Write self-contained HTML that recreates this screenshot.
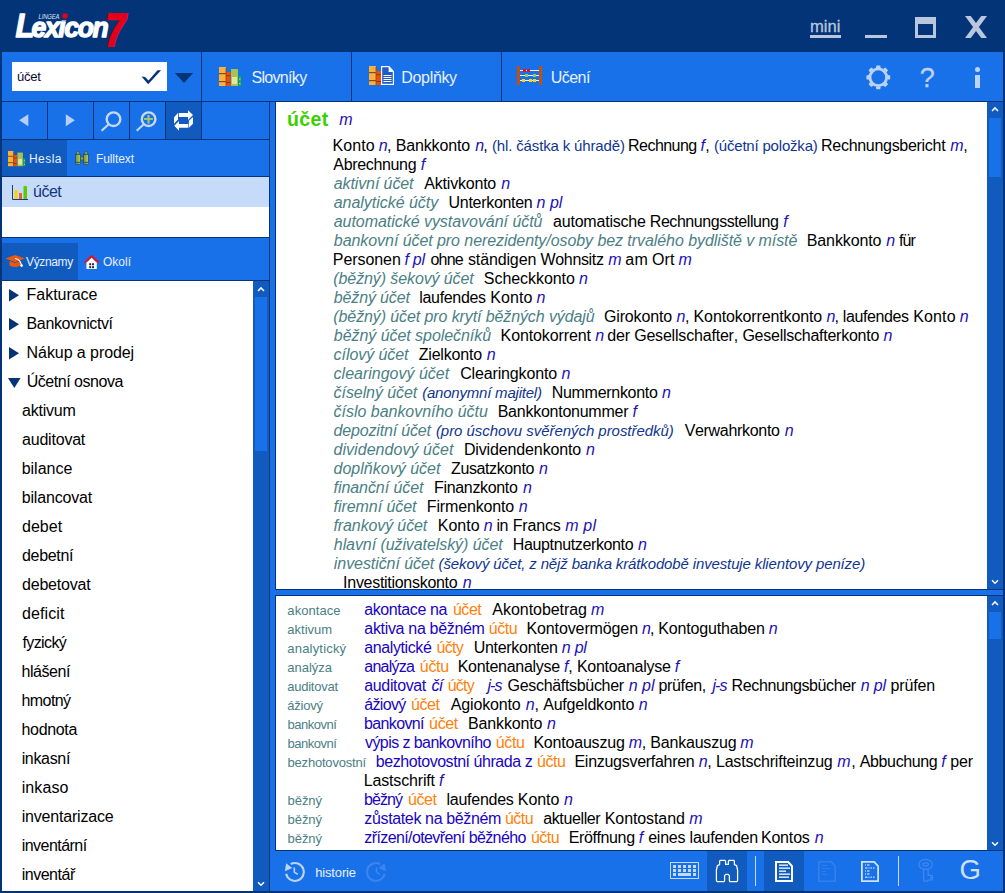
<!DOCTYPE html>
<html lang="cs">
<head>
<meta charset="utf-8">
<title>Lingea Lexicon 7</title>
<style>
*{box-sizing:border-box;margin:0;padding:0}
html,body{width:1005px;height:893px;overflow:hidden;background:#033478}
body{font-kerning:none;font-family:"Liberation Sans",sans-serif;font-size:16px;color:#000;position:relative}
div,span,svg{position:absolute}
span.i{position:static}
.r{position:absolute}
.tx{white-space:nowrap;line-height:19px;height:19px}
.tb{color:#e8f0ff;font-size:16px}
.tab{color:#e8f0ff;font-size:12px;line-height:15px;height:15px;white-space:nowrap}
.tree{font-size:16px;color:#000}
.tab13{font-size:13px;color:#e8f0ff}
.ln{white-space:nowrap;font-size:16px;line-height:19px;height:19px;font-kerning:none}
.ln *{position:static}
.p{color:#4a8084;font-style:italic}
.g{color:#1e10b4;font-style:italic}
.n{color:#0f3590;font-size:15px}
.ni{color:#0f3590;font-size:15px;font-style:italic}
.k{color:#4a8084;font-size:13px}
.b{color:#1a04c0}
.bi{color:#1a04c0;font-style:italic}
.o{color:#ff7f0a}
.h{color:#3ccf00;font-weight:bold;font-size:19.5px}
.t{color:#000}
</style>
</head>
<body>
<div style="left:0px;top:0px;width:1005px;height:52px;background:#033478;"></div>
<div style="left:2px;top:52px;width:1001px;height:839px;background:#1871e9;"></div>
<div style="left:2px;top:101px;width:1001px;height:1px;background:#033478;"></div>
<div style="left:201px;top:52px;width:1px;height:49px;background:#033478;"></div>
<div style="left:351px;top:52px;width:1px;height:49px;background:#033478;"></div>
<div style="left:501px;top:52px;width:1px;height:49px;background:#033478;"></div>
<svg style="left:0;top:0" width="140" height="52" viewBox="0 0 140 52" font-family="Liberation Sans, sans-serif">
<text x="0" y="0" transform="translate(15.4,37.0) scale(0.94,1)" font-weight="bold" font-style="italic" font-size="28.3" fill="#fff" stroke="#fff" stroke-width="1.3" stroke-linejoin="round" letter-spacing="-1.5"><tspan font-size="33" letter-spacing="-3">L</tspan>exicon</text>
<rect x="59.6" y="10" width="10" height="10" fill="#033478"/>
<text x="0" y="0" transform="translate(105.3,45.8) scale(0.78,1)" font-weight="bold" font-style="italic" font-size="47" fill="#e2001a" stroke="#e2001a" stroke-width="2" stroke-linejoin="miter">7</text>
<text x="0" y="0" transform="translate(38.6,18.8) scale(0.82,1)" font-style="italic" font-size="7.2" fill="#dfe6f2" letter-spacing="-0.2">LINGEA</text>
<circle cx="65" cy="16" r="2.8" fill="#e2001a"/>
</svg>
<div class="tx" style="left:810px;top:17px;font-size:16.6px;color:#b9c7de;-webkit-text-stroke:0.3px #b9c7de">mini</div>
<div style="left:810px;top:35px;width:31px;height:3px;background:#b9c7de;"></div>
<div style="left:865px;top:35px;width:22px;height:3px;background:#b9c7de;"></div>
<div style="left:915px;top:17px;width:21px;height:21px;border:3px solid #b9c7de;border-top-width:7px"></div>
<svg style="left:964.6px;top:15.8px" width="22" height="22" viewBox="0 0 21.4 21.4"><path d="M0 0 H5.6 L10.7 6.8 L15.8 0 H21.4 L13.5 10.7 L21.4 21.4 H15.8 L10.7 14.6 L5.6 21.4 H0 L7.9 10.7 Z" fill="#b9c7de"/></svg>
<div style="left:12px;top:62px;width:155px;height:29px;background:#fff;"></div>
<div class="tx" style="left:17px;top:67px;font-size:13px;color:#0a0a3a;letter-spacing:-0.25px">účet</div>
<svg style="left:140px;top:66px" width="24" height="20" viewBox="0 0 24 20"><path d="M1.5 10.5 L5.1 10.9 L8.5 14.5 L17.5 4.2 H21.05 L8.2 18.3 Z" fill="#033478"/></svg>
<svg style="left:174px;top:72px" width="20" height="12" viewBox="0 0 20 12"><path d="M0.9 1.0 H19.1 L10 10.9 Z" fill="#033478"/></svg>
<svg style="left:219px;top:67px" width="23" height="20" viewBox="0 0 23 20"><g>
<rect x="0" y="0" width="7" height="19" fill="#fbb03b"/>
<rect x="0" y="6" width="7" height="1.2" fill="#8a4a10"/><rect x="0" y="14" width="7" height="1.2" fill="#8a4a10"/>
<rect x="7" y="5" width="4.5" height="14" fill="#e8500e"/>
<rect x="6.6" y="1" width="0.8" height="18" fill="#8a4a10"/>
<rect x="7" y="8.2" width="4.5" height="1" fill="#a03008"/><rect x="7" y="15" width="4.5" height="1" fill="#a03008"/>
<rect x="12" y="2" width="7" height="17" fill="#a9c352"/>
<rect x="13" y="10" width="5" height="7" fill="#dde8a6"/>
<rect x="19.5" y="9" width="2.5" height="10" fill="#14b04a"/>
<rect x="20.2" y="11.5" width="1.2" height="1.2" fill="#e8e060"/><rect x="20.2" y="16" width="1.2" height="1.2" fill="#e8e060"/>
</g></svg>
<div class="ln" style="left:251.47px;top:68px"><span class="tb" style="letter-spacing:-0.687px">Slovníky</span></div>
<svg style="left:369px;top:66px" width="26" height="20" viewBox="0 0 26 20">
<rect x="0" y="0" width="7" height="19" fill="#fbb03b"/>
<rect x="0" y="6" width="7" height="1.2" fill="#8a4a10"/><rect x="0" y="14" width="7" height="1.2" fill="#8a4a10"/>
<rect x="7" y="5" width="5" height="14" fill="#e8500e"/>
<rect x="6.6" y="1" width="0.8" height="18" fill="#8a4a10"/>
<rect x="7" y="8.2" width="5" height="1" fill="#a03008"/><rect x="7" y="15" width="5" height="1" fill="#a03008"/>
<path d="M12.6 0.6 H20 L24.4 5.5 V18.4 H12.6 Z" fill="#1c5cc8" stroke="#fff" stroke-width="1.2"/>
<path d="M19.6 0.6 V6 H24.4 Z" fill="#fff"/>
<path d="M14.5 9.5 H22.5 M14.5 11.5 H22.5 M14.5 13.5 H22.5 M14.5 15.5 H22.5" stroke="#fff" stroke-width="1"/>
</svg>
<div class="ln" style="left:401.29px;top:68px"><span class="tb" style="letter-spacing:-0.327px">Doplňky</span></div>
<svg style="left:517px;top:66px" width="26" height="20" viewBox="0 0 26 20">
<path d="M2 4.5 H24 M2 9.5 H24 M2 14.5 H24" stroke="#f4f4f4" stroke-width="1"/>
<rect x="0" y="0" width="3" height="19" fill="#c05010"/><rect x="22" y="0" width="3" height="19" fill="#c05010"/>
<rect x="6" y="3" width="3" height="3" fill="#e8101c"/><rect x="10" y="3" width="3" height="3" fill="#e8101c"/>
<rect x="8" y="8" width="3" height="3" fill="#a9c352"/><rect x="16" y="8" width="3" height="3" fill="#a9c352"/>
<rect x="5" y="13" width="3" height="3" fill="#f4d41c"/><rect x="12" y="13" width="3" height="3" fill="#f4d41c"/><rect x="16" y="13" width="3" height="3" fill="#f4d41c"/>
</svg>
<div class="ln" style="left:550.77px;top:68px"><span class="tb" style="letter-spacing:-0.546px">Učení</span></div>
<svg style="left:865.3px;top:63.7px" width="26.6" height="26.6" viewBox="-14 -14 28 28"><circle cx="0" cy="0" r="8.8" fill="none" stroke="#bcd2f7" stroke-width="3"/><path d="M-2.6 -9.6 L-2.0 -12.5 H2.0 L2.6 -9.6 Z" fill="#bcd2f7" transform="rotate(0)"/><path d="M-2.6 -9.6 L-2.0 -12.5 H2.0 L2.6 -9.6 Z" fill="#bcd2f7" transform="rotate(45)"/><path d="M-2.6 -9.6 L-2.0 -12.5 H2.0 L2.6 -9.6 Z" fill="#bcd2f7" transform="rotate(90)"/><path d="M-2.6 -9.6 L-2.0 -12.5 H2.0 L2.6 -9.6 Z" fill="#bcd2f7" transform="rotate(135)"/><path d="M-2.6 -9.6 L-2.0 -12.5 H2.0 L2.6 -9.6 Z" fill="#bcd2f7" transform="rotate(180)"/><path d="M-2.6 -9.6 L-2.0 -12.5 H2.0 L2.6 -9.6 Z" fill="#bcd2f7" transform="rotate(225)"/><path d="M-2.6 -9.6 L-2.0 -12.5 H2.0 L2.6 -9.6 Z" fill="#bcd2f7" transform="rotate(270)"/><path d="M-2.6 -9.6 L-2.0 -12.5 H2.0 L2.6 -9.6 Z" fill="#bcd2f7" transform="rotate(315)"/></svg>
<div class="tx" style="left:919.8px;top:62.8px;font-size:27px;line-height:31px;height:31px;color:#bcd2f7;-webkit-text-stroke:0.3px #bcd2f7">?</div>
<div style="left:975.1px;top:74.5px;width:5px;height:13.5px;background:#bcd2f7;"></div>
<div style="left:975.1px;top:67px;width:5px;height:5px;border-radius:50%;background:#bcd2f7"></div>
<div style="left:166px;top:102px;width:35px;height:37px;background:#115abe;"></div>
<div style="left:47px;top:102px;width:1px;height:37px;background:#033478;"></div>
<div style="left:93px;top:102px;width:1px;height:37px;background:#033478;"></div>
<div style="left:129px;top:102px;width:1px;height:37px;background:#033478;"></div>
<div style="left:165px;top:102px;width:1px;height:37px;background:#033478;"></div>
<div style="left:201px;top:102px;width:1px;height:37px;background:#033478;"></div>
<div style="left:2px;top:139px;width:268px;height:1px;background:#033478;"></div>
<div style="left:269px;top:102px;width:1px;height:789px;background:#033478;"></div>
<svg style="left:0px;top:102px" width="202" height="38" viewBox="0 0 202 38">
<path d="M28.3 12.2 V24.2 L19.2 18.2 Z" fill="#b5cff8"/>
<path d="M65.8 12.2 V24.2 L74.9 18.2 Z" fill="#b5cff8"/>
<circle cx="113.5" cy="17.2" r="6.8" fill="none" stroke="#c4d9fb" stroke-width="2.4"/>
<path d="M108.4 22.4 L101.6 28.8" stroke="#c4d9fb" stroke-width="2" fill="none"/>
<circle cx="148.6" cy="17.2" r="6.8" fill="none" stroke="#c4d9fb" stroke-width="2.4"/>
<path d="M143.5 22.4 L136.7 28.8" stroke="#c4d9fb" stroke-width="2" fill="none"/>
<path d="M144.1 17 H152.9 M148.5 12.9 V21.5" stroke="#a3c475" stroke-width="2.2"/>
<g fill="#fff" transform="translate(166,0)">
<polygon points="12.8,11 22,11 22,8.3 27,13 22,17.9 22,15 12.8,15"/>
<polygon points="12,11 12,17.5 8,21.7 8,15.3"/>
<polygon points="22.3,22 13,22 13,19 8.3,23.8 13,28.7 13,25.7 22.3,25.7"/>
<polygon points="22.9,18.7 27,15.1 27,21.7 22.9,25.7"/>
</g>
</svg>
<div style="left:2px;top:140px;width:65px;height:36px;background:#115abe;"></div>
<div style="left:2px;top:176px;width:267px;height:1px;background:#033478;"></div>
<svg style="left:8px;top:151px" width="18" height="16" viewBox="0 0 23 20" preserveAspectRatio="none"><g>
<rect x="0" y="0" width="7" height="19" fill="#fbb03b"/>
<rect x="0" y="6" width="7" height="1.2" fill="#8a4a10"/><rect x="0" y="14" width="7" height="1.2" fill="#8a4a10"/>
<rect x="7" y="5" width="4.5" height="14" fill="#e8500e"/>
<rect x="6.6" y="1" width="0.8" height="18" fill="#8a4a10"/>
<rect x="7" y="8.2" width="4.5" height="1" fill="#a03008"/><rect x="7" y="15" width="4.5" height="1" fill="#a03008"/>
<rect x="12" y="2" width="7" height="17" fill="#a9c352"/>
<rect x="13" y="10" width="5" height="7" fill="#dde8a6"/>
<rect x="19.5" y="9" width="2.5" height="10" fill="#14b04a"/>
<rect x="20.2" y="11.5" width="1.2" height="1.2" fill="#e8e060"/><rect x="20.2" y="16" width="1.2" height="1.2" fill="#e8e060"/>
</g></svg>
<div class="tab" style="left:29px;top:152px;letter-spacing:0.45px">Hesla</div>
<svg style="left:75px;top:151px" width="14" height="14" viewBox="0 0 14 14">
<defs><linearGradient id="bg1" x1="0" x2="1" y1="0" y2="0"><stop offset="0" stop-color="#7d9838"/><stop offset="0.55" stop-color="#93ae4c"/><stop offset="1" stop-color="#bcd478"/></linearGradient></defs>
<rect x="1.6" y="0.6" width="2.8" height="3" rx="0.8" fill="#93ae4c" stroke="#1d4a6a" stroke-width="0.7"/>
<rect x="9.7" y="0.6" width="2.8" height="3" rx="0.8" fill="#93ae4c" stroke="#1d4a6a" stroke-width="0.7"/>
<rect x="5" y="5.9" width="4" height="3.1" fill="#8aa644" stroke="#1d4a6a" stroke-width="0.6"/>
<rect x="0.5" y="3.3" width="5" height="8" fill="url(#bg1)" stroke="#1d4a6a" stroke-width="0.8"/>
<rect x="8.5" y="3.3" width="5" height="8" fill="url(#bg1)" stroke="#1d4a6a" stroke-width="0.8"/>
<rect x="0.7" y="11.6" width="4.6" height="1.9" rx="0.5" fill="url(#bg1)" stroke="#1d4a6a" stroke-width="0.7"/>
<rect x="8.7" y="11.6" width="4.6" height="1.9" rx="0.5" fill="url(#bg1)" stroke="#1d4a6a" stroke-width="0.7"/>
</svg>
<div class="tab" style="left:96px;top:152px;letter-spacing:-0.1px">Fulltext</div>
<div style="left:2px;top:177px;width:267px;height:60px;background:#fff;"></div>
<div style="left:2px;top:177px;width:267px;height:30px;background:#c6dbfa;"></div>
<div style="left:2px;top:237px;width:267px;height:1px;background:#033478;"></div>
<svg style="left:12px;top:184px" width="16" height="16" viewBox="0 0 16 16">
<path d="M1.5 0.5 H15.5 M1.5 4.5 H15.5 M1.5 8.5 H15.5" stroke="#d0d8c8" stroke-width="0.6" stroke-dasharray="1 1"/>
<rect x="2.5" y="6" width="3" height="9" fill="#ffd000"/>
<rect x="7" y="9" width="3" height="6" fill="#e86040"/>
<rect x="11.5" y="2" width="3.5" height="13" fill="#5ccc00"/>
<path d="M0.5 1 V15.5 H16" stroke="#1c3a80" stroke-width="1" fill="none"/>
</svg>
<div class="tx" style="left:33px;top:182px;font-size:16px;color:#12357f;letter-spacing:-0.5px">účet</div>
<div style="left:2px;top:243px;width:76px;height:37px;background:#115abe;"></div>
<div style="left:2px;top:280px;width:267px;height:1px;background:#033478;"></div>
<svg style="left:5px;top:254px" width="21" height="15" viewBox="0 0 21 15">
<path d="M0.5 4.5 L10 1 L20 4.5 L10 8.2 Z" fill="#e85a10"/>
<path d="M4.5 7 V11.5 Q10 14.5 15.5 11.5 V7 L10 9 Z" fill="#e85a10"/>
<path d="M10 4.5 Q15 5 16.5 11" stroke="#fff" stroke-width="1.2" fill="none"/>
<circle cx="16.6" cy="11.6" r="1.3" fill="#fff"/>
</svg>
<div class="tab" style="left:26px;top:255px;letter-spacing:-0.35px">Významy</div>
<svg style="left:84px;top:254.8px" width="15.2" height="14.6" preserveAspectRatio="none" viewBox="0 0 16 15">
<path d="M2.5 7 H13.5 V14.5 H2.5 Z" fill="#f4f4f4"/>
<path d="M0.5 8 L8 1 L15.5 8" stroke="#e8101c" stroke-width="2" fill="none"/>
<path d="M8 2.8 L13 7.6 H3 Z" fill="#fff"/>
<rect x="5.5" y="8.5" width="2" height="2" fill="#222"/><rect x="8.5" y="8.5" width="2" height="2" fill="#222"/>
<rect x="5.5" y="11.5" width="2" height="2" fill="#222"/><rect x="8.5" y="11.5" width="2" height="2" fill="#222"/>
</svg>
<div class="tab" style="left:103px;top:255px">Okolí</div>
<div style="left:2px;top:281px;width:251px;height:610px;background:#fff;"></div>
<div style="left:253px;top:281px;width:16px;height:610px;background:#115abe;"></div>
<div style="left:255px;top:297px;width:12px;height:154px;background:#1871e9;"></div>
<svg style="left:257px;top:286px" width="8" height="6" viewBox="0 0 8 6"><path d="M1 4.9 L4 1.9 L7 4.9" stroke="#fff" stroke-width="1.45" fill="none"/></svg>
<svg style="left:257px;top:881px" width="8" height="6" viewBox="0 0 8 6"><path d="M1 1.3 L4 4.3 L7 1.3" stroke="#fff" stroke-width="1.45" fill="none"/></svg>
<svg style="left:9px;top:289px" width="11" height="13" viewBox="0 0 11 13"><path d="M0 0 L10 6.2 L0 12.4 Z" fill="#033478"/></svg>
<div class="ln" style="left:26.59px;top:285px"><span class="tree" style="letter-spacing:-0.040px">Fakturace</span></div>
<svg style="left:9px;top:318px" width="11" height="13" viewBox="0 0 11 13"><path d="M0 0 L10 6.2 L0 12.4 Z" fill="#033478"/></svg>
<div class="ln" style="left:26.59px;top:314px"><span class="tree" style="letter-spacing:-0.384px">Bankovnictví</span></div>
<svg style="left:9px;top:347px" width="11" height="13" viewBox="0 0 11 13"><path d="M0 0 L10 6.2 L0 12.4 Z" fill="#033478"/></svg>
<div class="ln" style="left:26.59px;top:343px"><span class="tree" style="letter-spacing:-0.071px">Nákup a prodej</span></div>
<svg style="left:8px;top:378px" width="13" height="11" viewBox="0 0 13 11"><path d="M0 0 H12.6 L6.3 10 Z" fill="#033478"/></svg>
<div class="ln" style="left:26.67px;top:372px"><span class="tree" style="letter-spacing:-0.462px">Účetní osnova</span></div>
<div class="ln" style="left:22.02px;top:401px"><span class="tree" style="letter-spacing:-0.215px">aktivum</span></div>
<div class="ln" style="left:22.02px;top:430px"><span class="tree" style="letter-spacing:-0.205px">auditovat</span></div>
<div class="ln" style="left:21.67px;top:459px"><span class="tree" style="letter-spacing:0.007px">bilance</span></div>
<div class="ln" style="left:21.67px;top:488px"><span class="tree" style="letter-spacing:-0.155px">bilancovat</span></div>
<div class="ln" style="left:22.03px;top:517px"><span class="tree" style="letter-spacing:0.012px">debet</span></div>
<div class="ln" style="left:22.03px;top:546px"><span class="tree" style="letter-spacing:-0.322px">debetní</span></div>
<div class="ln" style="left:22.03px;top:575px"><span class="tree" style="letter-spacing:-0.199px">debetovat</span></div>
<div class="ln" style="left:22.03px;top:604px"><span class="tree" style="letter-spacing:0.099px">deficit</span></div>
<div class="ln" style="left:22.47px;top:633px"><span class="tree" style="letter-spacing:-0.607px">fyzický</span></div>
<div class="ln" style="left:21.59px;top:662px"><span class="tree" style="letter-spacing:-0.468px">hlášení</span></div>
<div class="ln" style="left:21.59px;top:691px"><span class="tree" style="letter-spacing:-0.606px">hmotný</span></div>
<div class="ln" style="left:21.59px;top:720px"><span class="tree" style="letter-spacing:-0.354px">hodnota</span></div>
<div class="ln" style="left:21.63px;top:749px"><span class="tree" style="letter-spacing:-0.324px">inkasní</span></div>
<div class="ln" style="left:21.63px;top:778px"><span class="tree" style="letter-spacing:0.118px">inkaso</span></div>
<div class="ln" style="left:21.63px;top:807px"><span class="tree" style="letter-spacing:-0.183px">inventarizace</span></div>
<div class="ln" style="left:21.63px;top:836px"><span class="tree" style="letter-spacing:-0.524px">inventární</span></div>
<div class="ln" style="left:21.63px;top:865px"><span class="tree" style="letter-spacing:-0.476px">inventář</span></div>
<div style="left:275px;top:101px;width:729px;height:1px;background:#033478;"></div>
<div style="left:275px;top:102px;width:1px;height:488px;background:#033478;"></div>
<div style="left:276px;top:102px;width:711px;height:487px;background:#fff;"></div>
<div style="left:275px;top:589px;width:728px;height:1px;background:#033478;"></div>
<div style="left:987px;top:102px;width:16px;height:487px;background:#115abe;"></div>
<div style="left:989px;top:118px;width:12px;height:59px;background:#1871e9;"></div>
<svg style="left:991px;top:106px" width="8" height="6" viewBox="0 0 8 6"><path d="M1 4.9 L4 1.9 L7 4.9" stroke="#fff" stroke-width="1.45" fill="none"/></svg>
<svg style="left:991px;top:579px" width="8" height="6" viewBox="0 0 8 6"><path d="M1 1.3 L4 4.3 L7 1.3" stroke="#fff" stroke-width="1.45" fill="none"/></svg>
<div style="left:276px;top:102px;width:711px;height:487px;overflow:hidden" id="main">
<div class="ln" style="left:11.09px;top:8px"><span class="h" style="letter-spacing:0.384px">účet</span></div>
<div class="ln" style="left:63.33px;top:8px"><span class="g" style="letter-spacing:-0.100px">m</span></div>
<div class="ln" style="left:56.49px;top:34px"><span class="t" style="letter-spacing:0.093px">Konto</span></div>
<div class="ln" style="left:102.83px;top:34px"><span class="g" style="letter-spacing:-0.691px">n</span><span class="t" style="letter-spacing:-0.691px">,</span></div>
<div class="ln" style="left:119.69px;top:34px"><span class="t" style="letter-spacing:-0.141px">Bankkonto</span></div>
<div class="ln" style="left:199.13px;top:34px"><span class="g" style="letter-spacing:-0.708px">n</span><span class="t" style="letter-spacing:-0.708px">,</span></div>
<div class="ln" style="left:215.97px;top:34px"><span class="n" style="letter-spacing:-0.147px">(hl. částka k úhradě)</span></div>
<div class="ln" style="left:352.09px;top:34px"><span class="t" style="letter-spacing:-0.543px">Rechnung</span></div>
<div class="ln" style="left:424.46px;top:34px"><span class="g" style="letter-spacing:0.418px">f</span><span class="t" style="letter-spacing:0.418px">,</span></div>
<div class="ln" style="left:437.97px;top:34px"><span class="n" style="letter-spacing:-0.191px">(účetní položka)</span></div>
<div class="ln" style="left:545.09px;top:34px"><span class="t" style="letter-spacing:-0.296px">Rechnungsbericht</span></div>
<div class="ln" style="left:674.13px;top:34px"><span class="g" style="letter-spacing:-0.100px">m</span><span class="t" style="letter-spacing:-0.250px">,</span></div>
<div class="ln" style="left:57.37px;top:53px"><span class="t" style="letter-spacing:-0.347px">Abrechnung</span></div>
<div class="ln" style="left:144.86px;top:53px"><span class="g" style="letter-spacing:-0.100px">f</span></div>
<div class="ln" style="left:57.74px;top:72px"><span class="p" style="letter-spacing:-0.102px">aktivní účet</span></div>
<div class="ln" style="left:148.37px;top:72px"><span class="t" style="letter-spacing:-0.212px">Aktivkonto</span></div>
<div class="ln" style="left:225.23px;top:72px"><span class="g" style="letter-spacing:-0.100px">n</span></div>
<div class="ln" style="left:57.74px;top:91px"><span class="p" style="letter-spacing:-0.034px">analytické účty</span></div>
<div class="ln" style="left:172.57px;top:91px"><span class="t" style="letter-spacing:-0.299px">Unterkonten</span></div>
<div class="ln" style="left:260.53px;top:91px"><span class="g" style="letter-spacing:0.036px">n pl</span></div>
<div class="ln" style="left:57.74px;top:110px"><span class="p" style="letter-spacing:-0.041px">automatické vystavování účtů</span></div>
<div class="ln" style="left:277.02px;top:110px"><span class="t" style="letter-spacing:-0.207px">automatische</span></div>
<div class="ln" style="left:373.79px;top:110px"><span class="t" style="letter-spacing:-0.441px">Rechnungsstellung</span></div>
<div class="ln" style="left:507.26px;top:110px"><span class="g" style="letter-spacing:-0.100px">f</span></div>
<div class="ln" style="left:57.87px;top:129px"><span class="p" style="letter-spacing:-0.067px">bankovní účet pro nerezidenty/osoby bez trvalého bydliště v místě</span></div>
<div class="ln" style="left:530.79px;top:129px"><span class="t" style="letter-spacing:-0.116px">Bankkonto</span></div>
<div class="ln" style="left:610.13px;top:129px"><span class="g" style="letter-spacing:-0.100px">n</span></div>
<div class="ln" style="left:622.97px;top:129px"><span class="t" style="letter-spacing:-0.890px">für</span></div>
<div class="ln" style="left:56.79px;top:148px"><span class="t" style="letter-spacing:-0.063px">Personen</span></div>
<div class="ln" style="left:128.46px;top:148px"><span class="g" style="letter-spacing:-0.255px">f pl</span></div>
<div class="ln" style="left:154.43px;top:148px"><span class="t" style="letter-spacing:-0.756px">ohne</span></div>
<div class="ln" style="left:191.95px;top:148px"><span class="t" style="letter-spacing:-0.127px">ständigen</span></div>
<div class="ln" style="left:264.53px;top:148px"><span class="t" style="letter-spacing:-0.342px">Wohnsitz</span></div>
<div class="ln" style="left:332.13px;top:148px"><span class="g" style="letter-spacing:-0.100px">m</span></div>
<div class="ln" style="left:349.32px;top:148px"><span class="t" style="letter-spacing:0.195px">am</span></div>
<div class="ln" style="left:375.94px;top:148px"><span class="t" style="letter-spacing:0.087px">Ort</span></div>
<div class="ln" style="left:402.53px;top:148px"><span class="g" style="letter-spacing:-0.100px">m</span></div>
<div class="ln" style="left:57.35px;top:167px"><span class="p" style="letter-spacing:-0.105px">(běžný) šekový účet</span></div>
<div class="ln" style="left:207.87px;top:167px"><span class="t" style="letter-spacing:-0.061px">Scheckkonto</span></div>
<div class="ln" style="left:303.03px;top:167px"><span class="g" style="letter-spacing:-0.100px">n</span></div>
<div class="ln" style="left:57.87px;top:186px"><span class="p" style="letter-spacing:-0.157px">běžný účet</span></div>
<div class="ln" style="left:143.32px;top:186px"><span class="t" style="letter-spacing:-0.328px">laufendes</span></div>
<div class="ln" style="left:214.29px;top:186px"><span class="t" style="letter-spacing:0.068px">Konto</span></div>
<div class="ln" style="left:260.53px;top:186px"><span class="g" style="letter-spacing:-0.100px">n</span></div>
<div class="ln" style="left:57.35px;top:205px"><span class="p" style="letter-spacing:-0.104px">(běžný) účet pro krytí běžných výdajů</span></div>
<div class="ln" style="left:327.90px;top:205px"><span class="t" style="letter-spacing:-0.129px">Girokonto</span></div>
<div class="ln" style="left:400.43px;top:205px"><span class="g" style="letter-spacing:-0.391px">n</span><span class="t" style="letter-spacing:-0.391px">,</span></div>
<div class="ln" style="left:417.59px;top:205px"><span class="t" style="letter-spacing:-0.131px">Kontokorrentkonto</span></div>
<div class="ln" style="left:550.43px;top:205px"><span class="g" style="letter-spacing:-0.900px">n</span><span class="t" style="letter-spacing:-0.900px">,</span></div>
<div class="ln" style="left:566.72px;top:205px"><span class="t" style="letter-spacing:-0.378px">laufendes</span></div>
<div class="ln" style="left:637.29px;top:205px"><span class="t" style="letter-spacing:0.109px">Konto</span></div>
<div class="ln" style="left:683.73px;top:205px"><span class="g" style="letter-spacing:-0.100px">n</span></div>
<div class="ln" style="left:57.87px;top:224px"><span class="p" style="letter-spacing:-0.054px">běžný účet společníků</span></div>
<div class="ln" style="left:224.59px;top:224px"><span class="t" style="letter-spacing:-0.106px">Kontokorrent</span></div>
<div class="ln" style="left:319.23px;top:224px"><span class="g" style="letter-spacing:-0.100px">n</span></div>
<div class="ln" style="left:331.33px;top:224px"><span class="t" style="letter-spacing:-0.190px">der Gesellschafter,</span></div>
<div class="ln" style="left:466.40px;top:224px"><span class="t" style="letter-spacing:-0.248px">Gesellschafterkonto</span></div>
<div class="ln" style="left:607.53px;top:224px"><span class="g" style="letter-spacing:-0.100px">n</span></div>
<div class="ln" style="left:57.58px;top:243px"><span class="p" style="letter-spacing:-0.062px">cílový účet</span></div>
<div class="ln" style="left:142.69px;top:243px"><span class="t" style="letter-spacing:-0.193px">Zielkonto</span></div>
<div class="ln" style="left:210.83px;top:243px"><span class="g" style="letter-spacing:-0.100px">n</span></div>
<div class="ln" style="left:57.58px;top:262px"><span class="p" style="letter-spacing:-0.003px">clearingový účet</span></div>
<div class="ln" style="left:184.19px;top:262px"><span class="t" style="letter-spacing:-0.145px">Clearingkonto</span></div>
<div class="ln" style="left:285.43px;top:262px"><span class="g" style="letter-spacing:-0.100px">n</span></div>
<div class="ln" style="left:57.58px;top:281px"><span class="p" style="letter-spacing:-0.074px">číselný účet</span></div>
<div class="ln" style="left:146.20px;top:281px"><span class="ni" style="letter-spacing:-0.211px">(anonymní majitel)</span></div>
<div class="ln" style="left:275.69px;top:281px"><span class="t" style="letter-spacing:-0.290px">Nummernkonto</span></div>
<div class="ln" style="left:385.93px;top:281px"><span class="g" style="letter-spacing:-0.100px">n</span></div>
<div class="ln" style="left:57.58px;top:300px"><span class="p" style="letter-spacing:-0.026px">číslo bankovního účtu</span></div>
<div class="ln" style="left:221.69px;top:300px"><span class="t" style="letter-spacing:-0.251px">Bankkontonummer</span></div>
<div class="ln" style="left:356.56px;top:300px"><span class="g" style="letter-spacing:-0.100px">f</span></div>
<div class="ln" style="left:57.56px;top:319px"><span class="p" style="letter-spacing:-0.172px">depozitní účet</span></div>
<div class="ln" style="left:159.90px;top:319px"><span class="ni" style="letter-spacing:-0.042px">(pro úschovu svěřených prostředků)</span></div>
<div class="ln" style="left:408.63px;top:319px"><span class="t" style="letter-spacing:-0.307px">Verwahrkonto</span></div>
<div class="ln" style="left:508.73px;top:319px"><span class="g" style="letter-spacing:-0.100px">n</span></div>
<div class="ln" style="left:57.56px;top:338px"><span class="p" style="letter-spacing:0.040px">dividendový účet</span></div>
<div class="ln" style="left:187.89px;top:338px"><span class="t" style="letter-spacing:-0.129px">Dividendenkonto</span></div>
<div class="ln" style="left:310.03px;top:338px"><span class="g" style="letter-spacing:-0.100px">n</span></div>
<div class="ln" style="left:57.56px;top:357px"><span class="p" style="letter-spacing:0.012px">doplňkový účet</span></div>
<div class="ln" style="left:174.99px;top:357px"><span class="t" style="letter-spacing:-0.378px">Zusatzkonto</span></div>
<div class="ln" style="left:263.03px;top:357px"><span class="g" style="letter-spacing:-0.100px">n</span></div>
<div class="ln" style="left:57.56px;top:376px"><span class="p" style="letter-spacing:-0.062px">finanční účet</span></div>
<div class="ln" style="left:158.09px;top:376px"><span class="t" style="letter-spacing:-0.338px">Finanzkonto</span></div>
<div class="ln" style="left:246.93px;top:376px"><span class="g" style="letter-spacing:-0.100px">n</span></div>
<div class="ln" style="left:57.56px;top:395px"><span class="p" style="letter-spacing:-0.055px">firemní účet</span></div>
<div class="ln" style="left:150.79px;top:395px"><span class="t" style="letter-spacing:-0.154px">Firmenkonto</span></div>
<div class="ln" style="left:242.63px;top:395px"><span class="g" style="letter-spacing:-0.100px">n</span></div>
<div class="ln" style="left:57.56px;top:414px"><span class="p" style="letter-spacing:-0.123px">frankový účet</span></div>
<div class="ln" style="left:161.79px;top:414px"><span class="t" style="letter-spacing:-0.007px">Konto</span></div>
<div class="ln" style="left:207.83px;top:414px"><span class="g" style="letter-spacing:-0.100px">n</span></div>
<div class="ln" style="left:220.43px;top:414px"><span class="t" style="letter-spacing:-0.395px">in</span></div>
<div class="ln" style="left:236.69px;top:414px"><span class="t" style="letter-spacing:-0.162px">Francs</span></div>
<div class="ln" style="left:289.13px;top:414px"><span class="g" style="letter-spacing:0.227px">m pl</span></div>
<div class="ln" style="left:57.83px;top:433px"><span class="p" style="letter-spacing:-0.080px">hlavní (uživatelský) účet</span></div>
<div class="ln" style="left:236.79px;top:433px"><span class="t" style="letter-spacing:-0.368px">Hauptnutzerkonto</span></div>
<div class="ln" style="left:361.93px;top:433px"><span class="g" style="letter-spacing:-0.100px">n</span></div>
<div class="ln" style="left:57.84px;top:452px"><span class="p" style="letter-spacing:-0.070px">investiční účet</span></div>
<div class="ln" style="left:162.60px;top:452px"><span class="ni" style="letter-spacing:-0.135px">(šekový účet, z nějž banka krátkodobě investuje klientovy peníze)</span></div>
<div class="ln" style="left:67.12px;top:471px"><span class="t" style="letter-spacing:-0.289px">Investitionskonto</span></div>
<div class="ln" style="left:186.73px;top:471px"><span class="g" style="letter-spacing:-0.100px">n</span></div>
</div>
<div style="left:275px;top:595px;width:728px;height:1px;background:#033478;"></div>
<div style="left:275px;top:596px;width:1px;height:255px;background:#033478;"></div>
<div style="left:276px;top:596px;width:711px;height:254px;background:#fff;"></div>
<div style="left:275px;top:850px;width:728px;height:1px;background:#033478;"></div>
<div style="left:987px;top:596px;width:16px;height:254px;background:#115abe;"></div>
<div style="left:989px;top:612px;width:12px;height:27px;background:#1871e9;"></div>
<svg style="left:991px;top:600px" width="8" height="6" viewBox="0 0 8 6"><path d="M1 4.9 L4 1.9 L7 4.9" stroke="#fff" stroke-width="1.45" fill="none"/></svg>
<svg style="left:991px;top:841px" width="8" height="6" viewBox="0 0 8 6"><path d="M1 1.3 L4 4.3 L7 1.3" stroke="#fff" stroke-width="1.45" fill="none"/></svg>
<div style="left:276px;top:596px;width:711px;height:254px;overflow:hidden" id="lower">
<div class="ln" style="left:11.35px;top:4px"><span class="k" style="letter-spacing:0.053px">akontace</span></div>
<div class="ln" style="left:88.32px;top:4px"><span class="b" style="letter-spacing:-0.420px">akontace na</span></div>
<div class="ln" style="left:176.91px;top:4px"><span class="o" style="letter-spacing:-0.446px">účet</span></div>
<div class="ln" style="left:216.37px;top:4px"><span class="t" style="letter-spacing:-0.047px">Akontobetrag</span></div>
<div class="ln" style="left:314.93px;top:4px"><span class="g" style="letter-spacing:-0.100px">m</span></div>
<div class="ln" style="left:11.35px;top:23px"><span class="k" style="letter-spacing:-0.013px">aktivum</span></div>
<div class="ln" style="left:88.32px;top:23px"><span class="b" style="letter-spacing:-0.318px">aktiva na běžném</span></div>
<div class="ln" style="left:212.81px;top:23px"><span class="o" style="letter-spacing:-0.431px">účtu</span></div>
<div class="ln" style="left:250.49px;top:23px"><span class="t" style="letter-spacing:-0.117px">Kontovermögen</span></div>
<div class="ln" style="left:365.93px;top:23px"><span class="g" style="letter-spacing:-0.900px">n</span><span class="t" style="letter-spacing:-0.900px">,</span></div>
<div class="ln" style="left:382.29px;top:23px"><span class="t" style="letter-spacing:-0.166px">Kontoguthaben</span></div>
<div class="ln" style="left:492.73px;top:23px"><span class="g" style="letter-spacing:-0.100px">n</span></div>
<div class="ln" style="left:11.35px;top:42px"><span class="k" style="letter-spacing:0.189px">analytický</span></div>
<div class="ln" style="left:88.32px;top:42px"><span class="b" style="letter-spacing:-0.406px">analytické</span></div>
<div class="ln" style="left:160.51px;top:42px"><span class="o" style="letter-spacing:-0.676px">účty</span></div>
<div class="ln" style="left:197.67px;top:42px"><span class="t" style="letter-spacing:-0.289px">Unterkonten</span></div>
<div class="ln" style="left:285.83px;top:42px"><span class="g" style="letter-spacing:-0.264px">n pl</span></div>
<div class="ln" style="left:11.35px;top:61px"><span class="k" style="letter-spacing:-0.043px">analýza</span></div>
<div class="ln" style="left:88.32px;top:61px"><span class="b" style="letter-spacing:-0.745px">analýza</span></div>
<div class="ln" style="left:143.81px;top:61px"><span class="o" style="letter-spacing:-0.298px">účtu</span></div>
<div class="ln" style="left:181.69px;top:61px"><span class="t" style="letter-spacing:-0.286px">Kontenanalyse</span></div>
<div class="ln" style="left:288.06px;top:61px"><span class="g" style="letter-spacing:-0.164px">f</span><span class="t" style="letter-spacing:-0.164px">,</span></div>
<div class="ln" style="left:300.99px;top:61px"><span class="t" style="letter-spacing:-0.285px">Kontoanalyse</span></div>
<div class="ln" style="left:398.76px;top:61px"><span class="g" style="letter-spacing:-0.100px">f</span></div>
<div class="ln" style="left:11.35px;top:80px"><span class="k" style="letter-spacing:-0.264px">auditovat</span></div>
<div class="ln" style="left:88.32px;top:80px"><span class="b" style="letter-spacing:-0.368px">auditovat</span></div>
<div class="ln" style="left:155.58px;top:80px"><span class="bi" style="letter-spacing:-0.900px">čí</span></div>
<div class="ln" style="left:171.71px;top:80px"><span class="o" style="letter-spacing:-0.776px">účty</span></div>
<div class="ln" style="left:211.39px;top:80px"><span class="g" style="letter-spacing:-0.900px">j-s</span></div>
<div class="ln" style="left:231.60px;top:80px"><span class="t" style="letter-spacing:-0.320px">Geschäftsbücher</span></div>
<div class="ln" style="left:352.73px;top:80px"><span class="g" style="letter-spacing:0.003px">n pl</span></div>
<div class="ln" style="left:382.57px;top:80px"><span class="t" style="letter-spacing:-0.374px">prüfen,</span></div>
<div class="ln" style="left:436.39px;top:80px"><span class="g" style="letter-spacing:-0.900px">j-s</span></div>
<div class="ln" style="left:455.59px;top:80px"><span class="t" style="letter-spacing:-0.385px">Rechnungsbücher</span></div>
<div class="ln" style="left:584.73px;top:80px"><span class="g" style="letter-spacing:-0.164px">n pl</span></div>
<div class="ln" style="left:614.57px;top:80px"><span class="t" style="letter-spacing:-0.139px">prüfen</span></div>
<div class="ln" style="left:11.35px;top:99px"><span class="k" style="letter-spacing:-0.234px">ážiový</span></div>
<div class="ln" style="left:88.32px;top:99px"><span class="b" style="letter-spacing:-0.668px">ážiový</span></div>
<div class="ln" style="left:135.11px;top:99px"><span class="o" style="letter-spacing:-0.446px">účet</span></div>
<div class="ln" style="left:174.77px;top:99px"><span class="t" style="letter-spacing:-0.145px">Agiokonto</span></div>
<div class="ln" style="left:249.73px;top:99px"><span class="g" style="letter-spacing:-0.109px">n</span><span class="t" style="letter-spacing:-0.109px">,</span></div>
<div class="ln" style="left:267.17px;top:99px"><span class="t" style="letter-spacing:-0.191px">Aufgeldkonto</span></div>
<div class="ln" style="left:362.73px;top:99px"><span class="g" style="letter-spacing:-0.100px">n</span></div>
<div class="ln" style="left:11.56px;top:118px"><span class="k" style="letter-spacing:-0.480px">bankovní</span></div>
<div class="ln" style="left:87.97px;top:118px"><span class="b" style="letter-spacing:-0.633px">bankovní</span></div>
<div class="ln" style="left:153.11px;top:118px"><span class="o" style="letter-spacing:-0.380px">účet</span></div>
<div class="ln" style="left:192.09px;top:118px"><span class="t" style="letter-spacing:-0.166px">Bankkonto</span></div>
<div class="ln" style="left:270.93px;top:118px"><span class="g" style="letter-spacing:-0.100px">n</span></div>
<div class="ln" style="left:11.56px;top:137px"><span class="k" style="letter-spacing:-0.480px">bankovní</span></div>
<div class="ln" style="left:88.95px;top:137px"><span class="b" style="letter-spacing:-0.562px">výpis z bankovního</span></div>
<div class="ln" style="left:219.71px;top:137px"><span class="o" style="letter-spacing:-0.331px">účtu</span></div>
<div class="ln" style="left:257.39px;top:137px"><span class="t" style="letter-spacing:-0.196px">Kontoauszug</span></div>
<div class="ln" style="left:352.73px;top:137px"><span class="g" style="letter-spacing:-0.420px">m</span><span class="t" style="letter-spacing:-0.420px">,</span></div>
<div class="ln" style="left:374.29px;top:137px"><span class="t" style="letter-spacing:-0.202px">Bankauszug</span></div>
<div class="ln" style="left:464.33px;top:137px"><span class="g" style="letter-spacing:-0.100px">m</span></div>
<div class="ln" style="left:11.56px;top:156px"><span class="k" style="letter-spacing:-0.204px">bezhotovostní</span></div>
<div class="ln" style="left:99.87px;top:156px"><span class="b" style="letter-spacing:-0.453px">bezhotovostní úhrada z</span></div>
<div class="ln" style="left:261.11px;top:156px"><span class="o" style="letter-spacing:-0.465px">účtu</span></div>
<div class="ln" style="left:298.49px;top:156px"><span class="t" style="letter-spacing:-0.284px">Einzugsverfahren</span></div>
<div class="ln" style="left:422.63px;top:156px"><span class="g" style="letter-spacing:-0.191px">n</span><span class="t" style="letter-spacing:-0.191px">,</span></div>
<div class="ln" style="left:439.99px;top:156px"><span class="t" style="letter-spacing:-0.207px">Lastschrifteinzug</span></div>
<div class="ln" style="left:561.13px;top:156px"><span class="g" style="letter-spacing:0.661px">m</span><span class="t" style="letter-spacing:0.661px">,</span></div>
<div class="ln" style="left:583.77px;top:156px"><span class="t" style="letter-spacing:-0.375px">Abbuchung</span></div>
<div class="ln" style="left:665.26px;top:156px"><span class="g" style="letter-spacing:-0.100px">f</span></div>
<div class="ln" style="left:674.27px;top:156px"><span class="t" style="letter-spacing:-0.214px">per</span></div>
<div class="ln" style="left:87.69px;top:175px"><span class="t" style="letter-spacing:-0.158px">Lastschrift</span></div>
<div class="ln" style="left:163.06px;top:175px"><span class="g" style="letter-spacing:-0.100px">f</span></div>
<div class="ln" style="left:11.56px;top:194px"><span class="k" style="letter-spacing:-0.057px">běžný</span></div>
<div class="ln" style="left:87.97px;top:194px"><span class="b" style="letter-spacing:-0.900px">běžný</span></div>
<div class="ln" style="left:131.91px;top:194px"><span class="o" style="letter-spacing:-0.380px">účet</span></div>
<div class="ln" style="left:170.52px;top:194px"><span class="t" style="letter-spacing:-0.267px">laufendes</span></div>
<div class="ln" style="left:241.79px;top:194px"><span class="t" style="letter-spacing:-0.057px">Konto</span></div>
<div class="ln" style="left:288.03px;top:194px"><span class="g" style="letter-spacing:-0.100px">n</span></div>
<div class="ln" style="left:11.56px;top:213px"><span class="k" style="letter-spacing:-0.057px">běžný</span></div>
<div class="ln" style="left:88.35px;top:213px"><span class="b" style="letter-spacing:-0.364px">zůstatek na běžném</span></div>
<div class="ln" style="left:229.01px;top:213px"><span class="o" style="letter-spacing:-0.565px">účtu</span></div>
<div class="ln" style="left:267.22px;top:213px"><span class="t" style="letter-spacing:-0.379px">aktueller</span></div>
<div class="ln" style="left:328.79px;top:213px"><span class="t" style="letter-spacing:-0.101px">Kontostand</span></div>
<div class="ln" style="left:413.13px;top:213px"><span class="g" style="letter-spacing:-0.100px">m</span></div>
<div class="ln" style="left:11.56px;top:232px"><span class="k" style="letter-spacing:-0.057px">běžný</span></div>
<div class="ln" style="left:88.35px;top:232px"><span class="b" style="letter-spacing:-0.613px">zřízení/otevření běžného</span></div>
<div class="ln" style="left:254.91px;top:232px"><span class="o" style="letter-spacing:-0.465px">účtu</span></div>
<div class="ln" style="left:292.79px;top:232px"><span class="t" style="letter-spacing:-0.392px">Eröffnung</span></div>
<div class="ln" style="left:362.66px;top:232px"><span class="g" style="letter-spacing:-0.100px">f</span></div>
<div class="ln" style="left:372.22px;top:232px"><span class="t" style="letter-spacing:-0.262px">eines</span></div>
<div class="ln" style="left:413.62px;top:232px"><span class="t" style="letter-spacing:-0.221px">laufenden</span></div>
<div class="ln" style="left:484.89px;top:232px"><span class="t" style="letter-spacing:-0.164px">Kontos</span></div>
<div class="ln" style="left:538.73px;top:232px"><span class="g" style="letter-spacing:-0.100px">n</span></div>
</div>
<div style="left:707px;top:851px;width:40px;height:40px;background:#115abe;"></div>
<div style="left:764px;top:851px;width:40px;height:40px;background:#115abe;"></div>
<div style="left:754.8px;top:856px;width:1.3px;height:30px;background:#c4d9fb;"></div>
<div style="left:897.9px;top:856px;width:1.3px;height:30px;background:#c4d9fb;"></div>
<svg style="left:283px;top:860px" width="24" height="24" viewBox="0 0 24 24"><g>
<path d="M7.7 4.05 A8.95 8.95 0 1 1 3.15 13.8" stroke="#bcd3f9" stroke-width="2.1" fill="none"/>
<path d="M3.1 3.3 L9.3 8.0 L1.9 11.3 Z" fill="#bcd3f9"/></g>
<path d="M11.3 7.6 V12.1 L14.8 14.4" stroke="#bcd3f9" stroke-width="1.6" fill="none"/>
</svg>
<div class="ln" style="left:315.20px;top:862px"><span class="tab13" style="letter-spacing:-0.147px">historie</span></div>
<svg style="left:364px;top:860px" width="24" height="24" viewBox="0 0 24 24"><g transform="translate(23.8,0) scale(-1,1)">
<path d="M7.7 4.05 A8.95 8.95 0 1 1 3.15 13.8" stroke="#3d84ee" stroke-width="2.1" fill="none"/>
<path d="M3.1 3.3 L9.3 8.0 L1.9 11.3 Z" fill="#3d84ee"/></g>
<path d="M12.5 7.6 V12.1 L16 14.4" stroke="#3d84ee" stroke-width="1.6" fill="none"/>
</svg>
<svg style="left:670px;top:862px" width="29" height="17" viewBox="0 0 29 17"><rect x="0.5" y="0.5" width="28" height="16" fill="none" stroke="#c4d9fb" stroke-width="1"/><rect x="3" y="3" width="3" height="3" fill="#c4d9fb"/><rect x="8" y="3" width="3" height="3" fill="#c4d9fb"/><rect x="13" y="3" width="3" height="3" fill="#c4d9fb"/><rect x="18" y="3" width="3" height="3" fill="#c4d9fb"/><rect x="23" y="3" width="3" height="3" fill="#c4d9fb"/><rect x="3" y="7" width="3" height="3" fill="#c4d9fb"/><rect x="8" y="7" width="3" height="3" fill="#c4d9fb"/><rect x="13" y="7" width="3" height="3" fill="#c4d9fb"/><rect x="18" y="7" width="3" height="3" fill="#c4d9fb"/><rect x="23" y="7" width="3" height="3" fill="#c4d9fb"/><rect x="3" y="11" width="3" height="3" fill="#c4d9fb"/><rect x="8" y="11" width="13" height="3" fill="#c4d9fb"/><rect x="23" y="11" width="3" height="3" fill="#c4d9fb"/></svg>
<svg style="left:705px;top:850px" width="40" height="42" viewBox="0 0 40 42">
<path d="M15.2 10.4 H20 L20.6 11.4 V14.4 H23.4 V11.4 L24 10.4 H28.8 L29.4 11.4 V14.6 L31.6 15.6 L32.6 20 V30.6 L31.8 31.7 H25 L24.4 30.6 V25.6 L23.2 24.3 H20.8 L19.6 25.6 V30.6 L19 31.7 H12.2 L11.4 30.6 V20 L12.4 15.6 L14.6 14.6 V11.4 Z" fill="none" stroke="#fff" stroke-width="1.25" stroke-linejoin="round"/>
</svg>
<svg style="left:775px;top:861px" width="18" height="21" viewBox="0 0 18 21"><path d="M1.0 1.0 H13.2 L17.0 5.2 V20.0 H1.0 Z" fill="none" stroke="#fff" stroke-width="2"/><rect x="4" y="3.4999999999999996" width="9" height="1.3" fill="#fff"/><rect x="4" y="6.5" width="11" height="1.3" fill="#fff"/><rect x="4" y="9.5" width="7" height="1.3" fill="#fff"/><rect x="4" y="12.5" width="11" height="1.3" fill="#fff"/><rect x="4" y="15.500000000000002" width="10" height="1.3" fill="#fff"/></svg>
<svg style="left:818px;top:861px" width="18" height="21" viewBox="0 0 18 21"><path d="M0.8 0.8 H13.2 L17.2 5.1 V20.2 H0.8 Z" fill="none" stroke="#3380ec" stroke-width="1.6"/><rect x="4" y="3.9000000000000004" width="5" height="1" fill="#3380ec"/><rect x="4" y="6.9" width="8" height="1" fill="#3380ec"/><rect x="4" y="9.9" width="4" height="1" fill="#3380ec"/><rect x="4" y="12.9" width="5" height="1" fill="#3380ec"/></svg>
<svg style="left:861px;top:861px" width="18" height="21" viewBox="0 0 18 21"><path d="M0.9 0.9 H13.2 L17.1 5.2 V20.1 H0.9 Z" fill="none" stroke="#cfe0fb" stroke-width="1.8"/><rect x="4" y="3.4" width="1" height="1.2" fill="#cfe0fb"/><rect x="6" y="3.4" width="2.5" height="1.2" fill="#cfe0fb"/><rect x="4" y="6.4" width="2.5" height="1.2" fill="#cfe0fb"/><rect x="7.5" y="6.4" width="1" height="1.2" fill="#cfe0fb"/><rect x="9.5" y="6.4" width="1.5" height="1.2" fill="#cfe0fb"/><rect x="12" y="6.4" width="1.5" height="1.2" fill="#cfe0fb"/><rect x="4" y="9.4" width="1" height="1.2" fill="#cfe0fb"/><rect x="6" y="9.4" width="2.5" height="1.2" fill="#cfe0fb"/><rect x="4" y="12.4" width="1" height="1.2" fill="#cfe0fb"/><rect x="6" y="12.4" width="2.5" height="1.2" fill="#cfe0fb"/><rect x="4" y="15.6" width="2.5" height="1.2" fill="#cfe0fb"/><rect x="7.5" y="15.6" width="1" height="1.2" fill="#cfe0fb"/><rect x="9.5" y="15.6" width="1.5" height="1.2" fill="#cfe0fb"/><rect x="12" y="15.6" width="1.5" height="1.2" fill="#cfe0fb"/></svg>
<svg style="left:905px;top:850px" width="40" height="42" viewBox="0 0 40 42">
<ellipse cx="20.6" cy="14.4" rx="6.7" ry="5" fill="none" stroke="#4088ef" stroke-width="1.2"/>
<ellipse cx="20.6" cy="14.4" rx="2.8" ry="1.5" fill="none" stroke="#4088ef" stroke-width="1.1"/>
<path d="M18.6 19.4 V30.4 Q18.6 31.2 19.4 31.2 H22.4 Q23.2 31.2 23.2 30.4 V30 H26.6 Q27.4 30 27.4 29.2 V26.2 Q27.4 25.4 26.6 25.4 H23.2 V19.4" fill="none" stroke="#4088ef" stroke-width="1.2"/>
<path d="M25 27 H26.4 V28.6 H25" fill="none" stroke="#4088ef" stroke-width="1"/>
</svg>
<div class="tx" style="left:959.5px;top:855px;font-size:27.5px;line-height:30px;height:30px;color:#d0e0fb">G</div>
</body>
</html>
